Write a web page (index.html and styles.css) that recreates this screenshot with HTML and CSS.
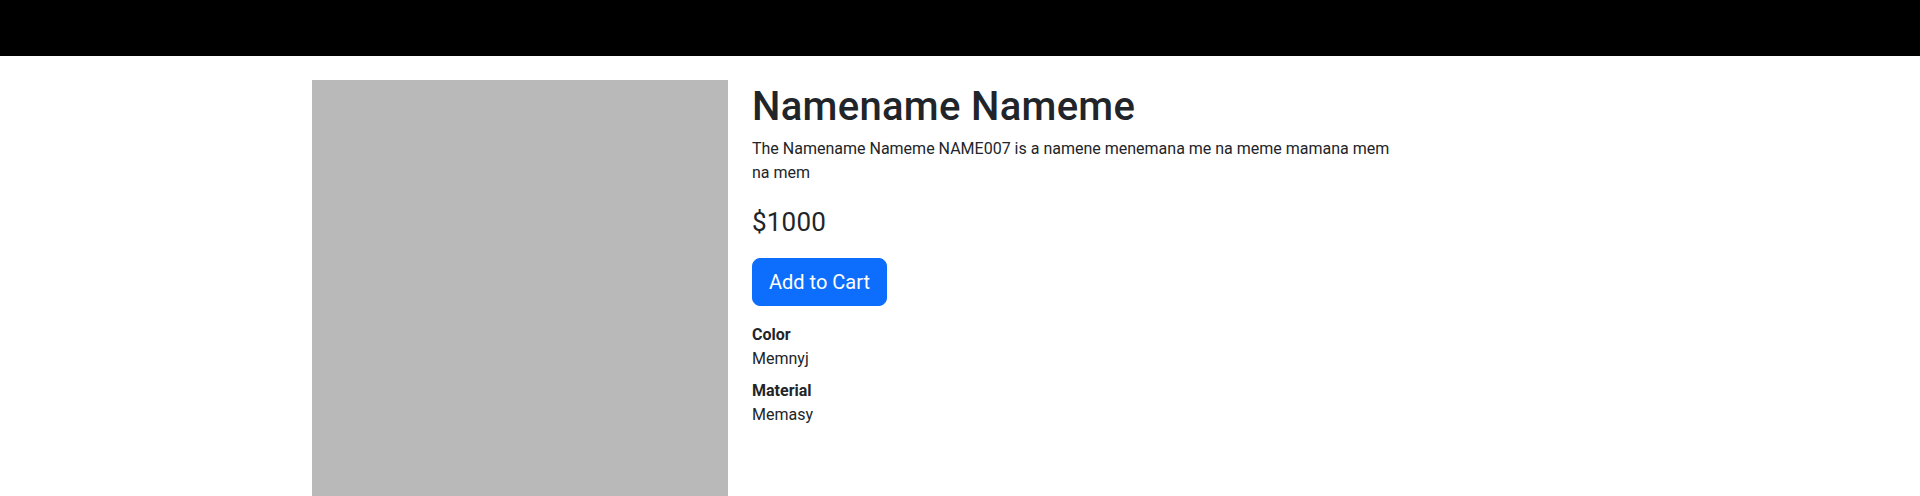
FILE: index.html
```html
<!DOCTYPE html>
<html lang="en">
<head>
<meta charset="utf-8">
<title>Namename Nameme</title>
<link rel="stylesheet" href="styles.css">
</head>
<body>
<nav class="topbar"></nav>
<main class="container">
  <div class="product">
    <div class="product-image"></div>
    <div class="product-info">
      <h1 class="product-title">Namename Nameme</h1>
      <p class="product-desc">The Namename Nameme NAME007 is a namene menemana me na meme mamana mem na mem</p>
      <p class="product-price">$1000</p>
      <div class="product-actions">
        <button class="btn-cart" type="button">Add to Cart</button>
      </div>
      <dl class="specs">
        <dt>Color</dt>
        <dd>Memnyj</dd>
        <dt>Material</dt>
        <dd>Memasy</dd>
      </dl>
    </div>
  </div>
</main>
</body>
</html>
```
FILE: styles.css
```css
* { box-sizing: border-box; }

body {
  margin: 0;
  font-family: Roboto, "Noto Sans", sans-serif;
  font-size: 16px;
  line-height: 1.5;
  color: #212529;
  background: #fff;
}

.topbar {
  height: 56px;
  background: #000;
}

.container {
  max-width: 1320px;
  margin: 0 auto;
  padding: 0 12px;
}

.product {
  display: grid;
  grid-template-columns: 416px 648px;
  column-gap: 24px;
  margin-top: 24px;
}

.product-image {
  width: 416px;
  height: 416px;
  background: #b9b9b9;
}

.product-title {
  margin: 0 0 5px;
  padding-top: 3px;
  font-size: 40px;
  font-weight: 500;
  line-height: 1.2;
  letter-spacing: 0.3px;
}

.product-desc {
  margin: 0 0 16px;
  padding-top: 1px;
}

.product-price {
  margin: 0 0 16px;
  padding-top: 2px;
  font-size: 26px;
  line-height: 1.5;
  letter-spacing: 0.2px;
}

.product-actions {
  margin-bottom: 16px;
}

.btn-cart {
  display: inline-block;
  height: 48px;
  padding: 8px 16px;
  font-family: inherit;
  font-size: 20px;
  line-height: 1.5;
  color: #fff;
  background: #0d6efd;
  border: 1px solid #0d6efd;
  border-radius: 8px;
  cursor: pointer;
}

.specs {
  margin: 0;
  padding-top: 1px;
}

.specs dt {
  font-weight: 700;
}

.specs dd {
  margin: 0 0 8px;
}
```
